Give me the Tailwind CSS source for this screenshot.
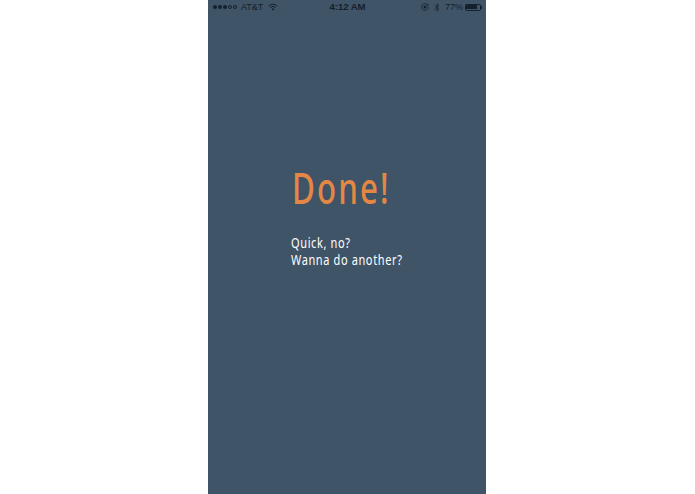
<!DOCTYPE html>
<html>
<head>
<meta charset="utf-8">
<script src="https://cdn.jsdelivr.net/npm/@tailwindcss/browser@4"></script>
</head>
<body class="bg-white overflow-hidden">
<div class="w-[695px] h-[494px] flex justify-center">
  <div class="w-[278px] h-[494px] ml-[-1px] bg-[#3f5467] flex flex-col font-['Liberation_Sans',sans-serif]">
    <div class="h-[14px] pl-[5px] pr-[4px] flex items-center justify-between text-[9px] leading-[14px] text-[#14202c]">
      <div class="flex items-center w-[100px]">
        <div class="flex gap-[1px] items-center">
          <span class="w-[4px] h-[4px] rounded-full bg-[#14202c]"></span>
          <span class="w-[4px] h-[4px] rounded-full bg-[#14202c]"></span>
          <span class="w-[4px] h-[4px] rounded-full bg-[#14202c]"></span>
          <span class="w-[4px] h-[4px] rounded-full border-[0.5px] border-[#14202c]"></span>
          <span class="w-[4px] h-[4px] rounded-full border-[0.5px] border-[#14202c]"></span>
        </div>
        <span class="ml-[4px]">AT&amp;T</span>
        <svg class="ml-[5px]" width="10" height="8" viewBox="0 0 10 8" fill="none" stroke="#14202c" stroke-width="1"><path d="M0.7 3Q5 -0.6 9.3 3"/><path d="M2.2 4.5Q5 2.2 7.8 4.5"/><path d="M5 7.4L3.6 5.9Q5 4.8 6.4 5.9Z" fill="#14202c" stroke="none"/></svg>
      </div>
      <div class="font-semibold text-[9.5px]">4:12 AM</div>
      <div class="flex items-center justify-end w-[100px]">
        <svg width="8" height="8" viewBox="0 0 8 8" fill="none" stroke="#14202c" stroke-width="0.8"><path d="M6.9 2.2A3.4 3.4 0 1 0 7.4 4"/><path d="M7.6 1L7 2.7L5.4 2.2" stroke-width="0.7"/><circle cx="4" cy="4" r="1.5" fill="#14202c" stroke="none"/></svg>
        <svg class="ml-[5px]" width="6" height="9" viewBox="0 0 6 9" fill="none" stroke="#14202c" stroke-width="0.7"><path d="M0.6 2.4L5 6.4L3 8.2V0.8L5 2.6L0.6 6.6"/></svg>
        <span class="ml-[5px]">77%</span>
        <div class="ml-[2px] w-[16px] h-[7px] rounded-[1.5px] border-[0.5px] border-[#14202c] p-[0.5px]"><div class="w-[80%] h-full bg-[#14202c]"></div></div>
        <div class="w-[1px] h-[3px] bg-[#14202c]"></div>
      </div>
    </div>
    <div class="mt-[149px] ml-[84px] text-[44px] leading-[48px] font-medium text-[#e58744] font-['Noto_Sans',sans-serif] tracking-[3px] origin-left scale-x-[0.71] whitespace-nowrap">Done!</div>
    <div class="mt-[23px] ml-[83px] text-[14.5px] leading-[17px] text-white font-['Noto_Sans',sans-serif] tracking-[0.8px] origin-left scale-x-[0.76] whitespace-nowrap">
      <p>Quick, no?</p>
      <p>Wanna do another?</p>
    </div>
  </div>
</div>
</body>
</html>
